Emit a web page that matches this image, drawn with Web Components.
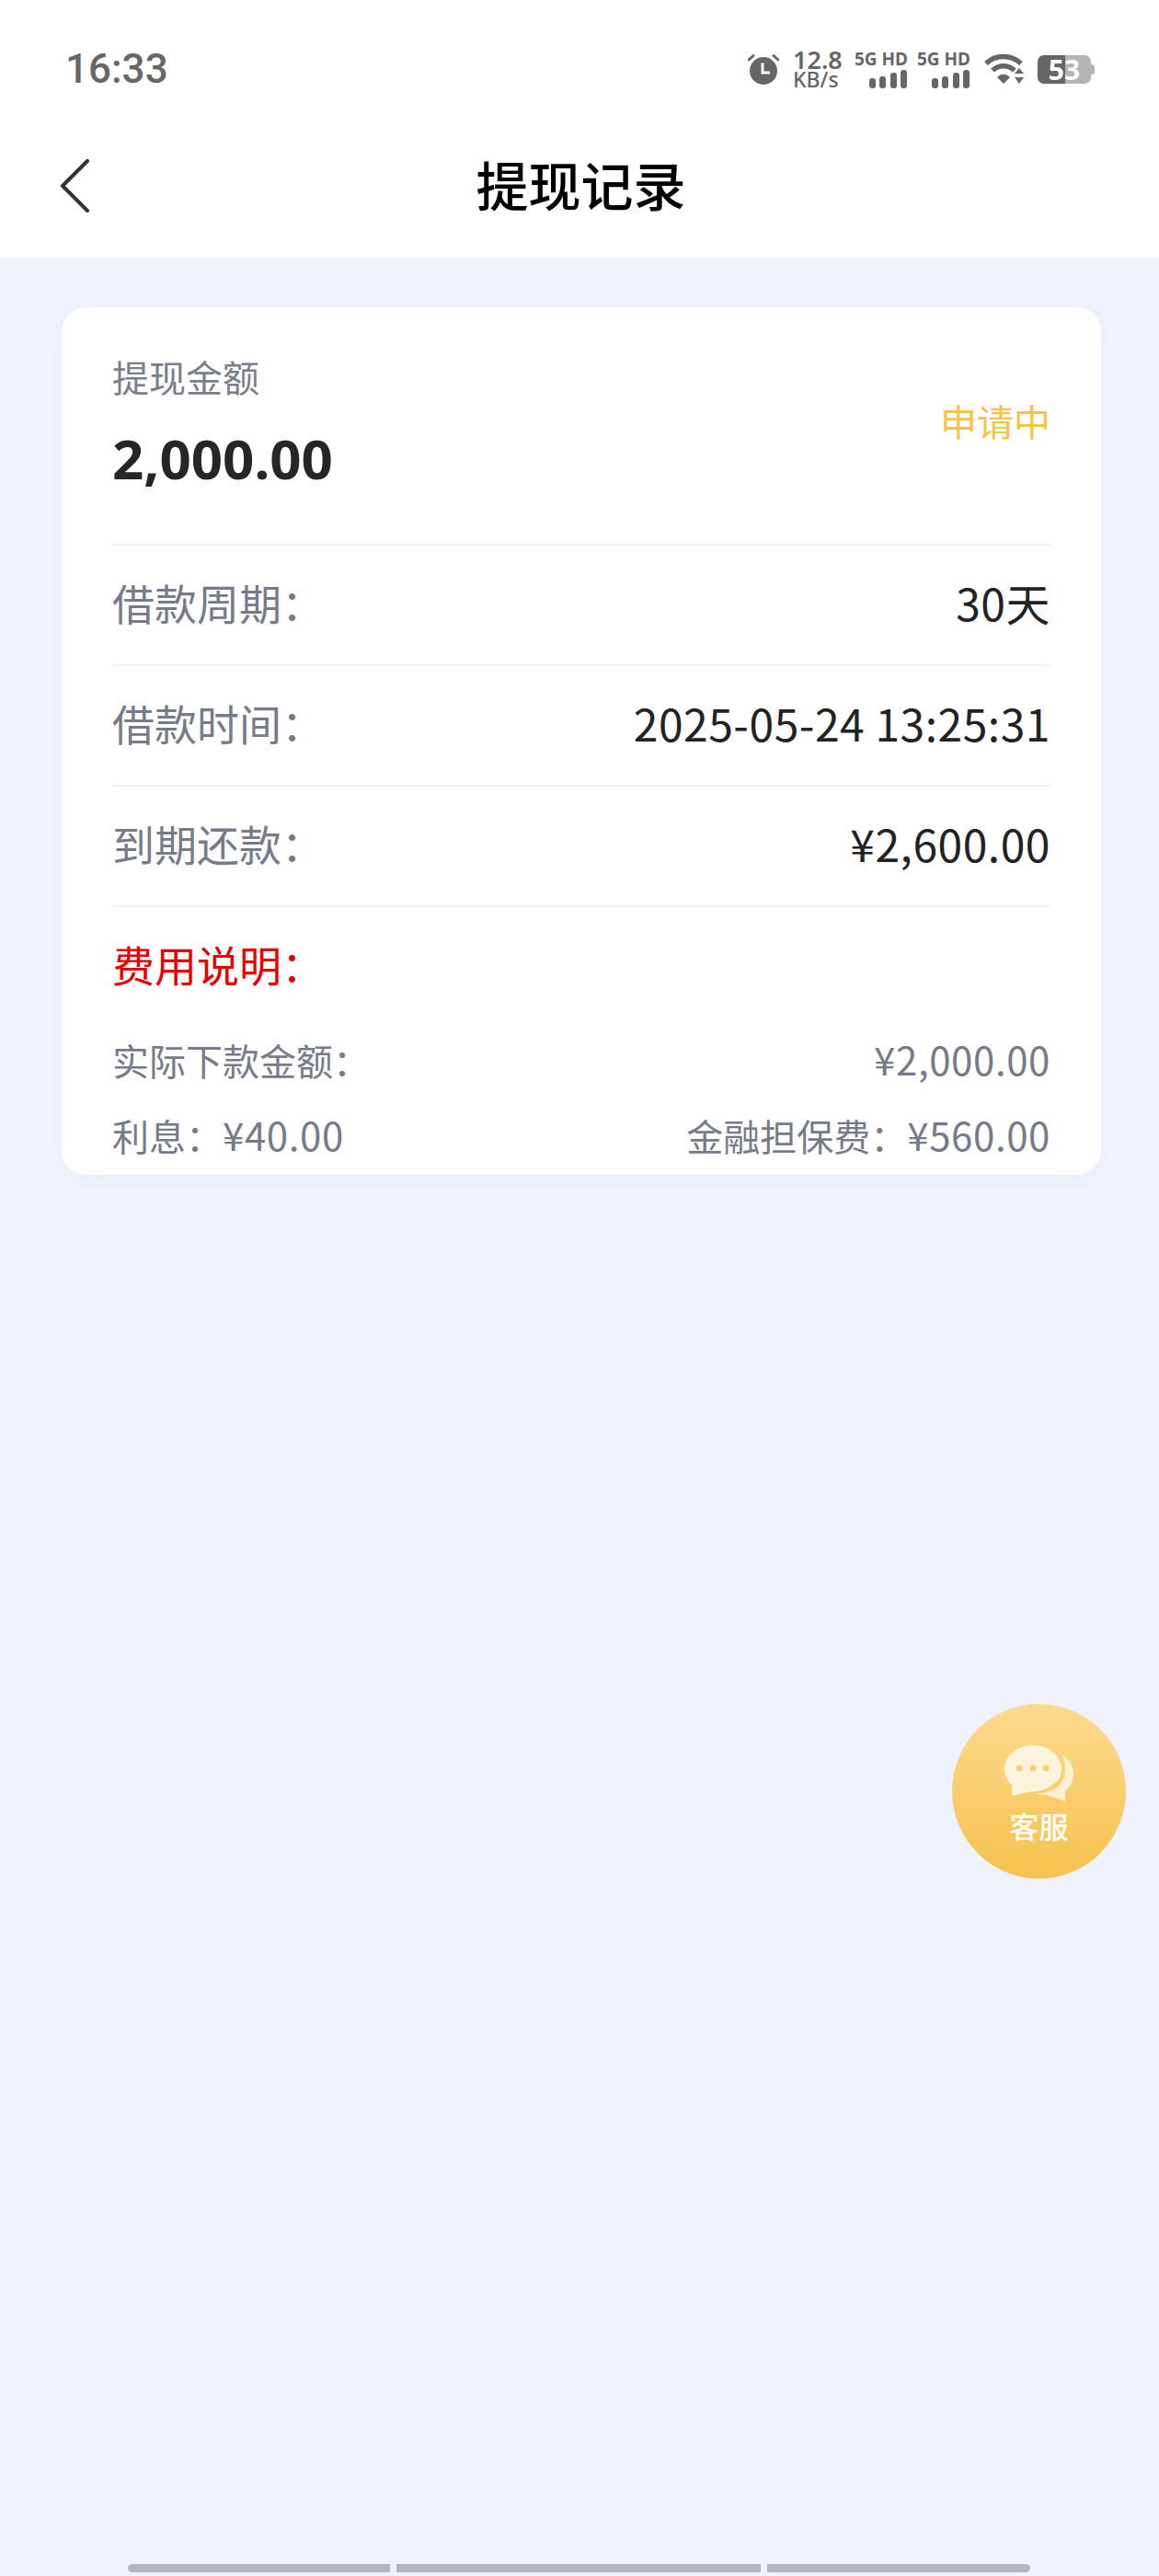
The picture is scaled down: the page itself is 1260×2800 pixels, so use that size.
<!DOCTYPE html>
<html lang="zh-CN">
<head>
<meta charset="utf-8">
<title>提现记录</title>
<style>
html, body {
    margin: 0;
    background: #f0f3fe;
    font-family: "Noto Sans CJK SC", "Noto Sans", sans-serif;
}
</style>
</head>
<body>
<record-page>
    <status-bar></status-bar>
    <nav-header>提现记录</nav-header>
    <record-card>
        <record-row><span slot="label">借款周期：</span>30天</record-row>
        <record-row><span slot="label">借款时间：</span>2025-05-24 13:25:31</record-row>
        <record-row><span slot="label">到期还款：</span>¥2,600.00</record-row>
        <fee-note slot="fees"></fee-note>
    </record-card>
    <service-button></service-button>
    <gesture-bar></gesture-bar>
</record-page>
<script>
class RecordPage extends HTMLElement {
    constructor() {
        super();
        this.attachShadow({ mode: 'open' }).innerHTML = `
<style>
:host {
    display: flex;
    flex-direction: column;
    position: relative;
    height: 2800px;
    overflow: hidden;
    background: #f0f3fe;
}
</style>
<slot></slot>`;
    }
}

class StatusBar extends HTMLElement {
    constructor() {
        super();
        const signal = `
<div class="net">
    <span class="net-label">5G HD</span>
    <svg width="42" height="20" viewBox="0 0 42 20" fill="#666">
        <rect x="0" y="9" width="7" height="11" rx="3"/>
        <rect x="11" y="7" width="7" height="13" rx="3"/>
        <rect x="23" y="3" width="7" height="17" rx="3"/>
        <rect x="34" y="0" width="7" height="20" rx="3"/>
    </svg>
</div>`;
        this.attachShadow({ mode: 'open' }).innerHTML = `
<style>
:host {
    display: flex;
    align-items: center;
    justify-content: space-between;
    height: 124px;
    padding: 26px 74px 0 71px;
    box-sizing: border-box;
    background: #fff;
    color: #666;
}
.time {
    font: 500 44px/1 Roboto, sans-serif;
}
.icons {
    display: flex;
    align-items: center;
}
.speed {
    display: flex;
    flex-direction: column;
    width: 52px;
    margin: 0 17px 0 15px;
    color: #666;
}
.speed b {
    font: 600 27px/22px "Noto Sans", sans-serif;
}
.speed span {
    font: 500 23px/20px "Noto Sans", sans-serif;
}
.net {
    display: flex;
    flex-direction: column;
    align-items: flex-end;
    width: 56px;
    margin-right: 12px;
}
.net-label {
    font: 700 19px/19px "Noto Sans", sans-serif;
    white-space: nowrap;
    margin-bottom: 2px;
}
.wifi {
    margin: 0 15px 0 3px;
}
.battery {
    position: relative;
    display: flex;
    align-items: center;
    justify-content: center;
    width: 58px;
    height: 31px;
    border-radius: 7px;
    background: linear-gradient(90deg, #666 0 30px, #b4b4b4 30px);
    color: #fff;
    font: 700 30px/31px "Noto Sans", sans-serif;
}
.battery::after {
    content: "";
    position: absolute;
    right: -4px;
    top: 10px;
    width: 4px;
    height: 11px;
    border-radius: 0 3px 3px 0;
    background: #b4b4b4;
}
</style>
<span class="time">16:33</span>
<div class="icons">
    <svg width="34" height="34" viewBox="0 0 34 34">
        <circle cx="17" cy="19" r="15" fill="#666"/>
        <path d="M1 7 6 2.5M33 7 28 2.5" stroke="#666" stroke-width="3" stroke-linecap="round"/>
        <path d="M16 10.5V21H24" fill="none" stroke="#fff" stroke-width="3"/>
    </svg>
    <div class="speed"><b>12.8</b><span>KB/s</span></div>
    ${signal}
    ${signal}
    <svg class="wifi" width="43" height="35" viewBox="0 0 43 35" fill="none">
        <path d="M2 11C12 1 29 1 40 11" stroke="#666" stroke-width="5.5"/>
        <path d="M9 18.5C16 12 26 12 33 18.5" stroke="#666" stroke-width="5.5"/>
        <path d="M14 26 21 33 28 26C24 21.500 18 21.500 14 26Z" fill="#666"/>
        <path d="M33 22H43L38 16ZM33 26H43L38 33Z" fill="#666"/>
    </svg>
    <div class="battery">53</div>
</div>`;
    }
}

class NavHeader extends HTMLElement {
    constructor() {
        super();
        this.attachShadow({ mode: 'open' }).innerHTML = `
<style>
:host {
    display: grid;
    grid-template-columns: 1fr auto 1fr;
    align-items: center;
    height: 156px;
    padding: 0 64px;
    background: #fff;
    color: #000;
}
svg {
    display: block;
}
.title {
    font-size: 57px;
    line-height: 1;
    font-weight: 500;
    padding: 0 0 6px 3px;
}
</style>
<svg width="34" height="58" viewBox="0 0 34 58" fill="none">
    <path d="M31 2 4 29 31 56" stroke="#333" stroke-width="4" stroke-linecap="round" stroke-linejoin="round"/>
</svg>
<span class="title"><slot></slot></span>`;
    }
}

class RecordCard extends HTMLElement {
    constructor() {
        super();
        this.attachShadow({ mode: 'open' }).innerHTML = `
<style>
:host {
    display: block;
    margin: 54px 63px 0 67px;
    height: 943px;
    padding: 0 55px;
    box-sizing: border-box;
    background: #fff;
    border-radius: 26px;
    box-shadow: 0 4px 16px rgba(120, 130, 200, 0.06);
}
.top {
    display: flex;
    align-items: center;
    justify-content: space-between;
    height: 259px;
    box-sizing: border-box;
    border-bottom: 2px solid #f1f2f6;
}
.caption {
    font-size: 40px;
    line-height: 56px;
    color: #7a7e8b;
    margin-bottom: 27px;
}
.amount {
    font: 700 60px/68px "Noto Sans", sans-serif;
    color: #262626;
    margin-bottom: 13px;
}
.state {
    font-size: 40px;
    line-height: 1;
    color: #f5c445;
    margin-bottom: 12px;
}
</style>
<div class="top">
    <div>
        <div class="caption">提现金额</div>
        <div class="amount">2,000.00</div>
    </div>
    <span class="state">申请中</span>
</div>
<slot></slot>
<slot name="fees"></slot>`;
    }
}

class RecordRow extends HTMLElement {
    constructor() {
        super();
        this.attachShadow({ mode: 'open' }).innerHTML = `
<style>
:host {
    display: flex;
    align-items: center;
    justify-content: space-between;
    height: 131px;
    padding-bottom: 7px;
    box-sizing: border-box;
    border-bottom: 2px solid #f1f2f6;
    font-size: 46px;
    color: #222;
}
.label {
    color: #777b89;
}
.value {
    font-size: 48px;
    letter-spacing: 0.5px;
}
</style>
<span class="label"><slot name="label"></slot></span>
<span class="value"><slot></slot></span>`;
    }
}

class FeeNote extends HTMLElement {
    constructor() {
        super();
        this.attachShadow({ mode: 'open' }).innerHTML = `
<style>
:host {
    display: block;
    color: #777b89;
    font-size: 40px;
    line-height: 56px;
}
.heading {
    margin: 33px 0 0;
    font-size: 46px;
    line-height: 56px;
    color: #e60000;
}
.line {
    display: flex;
    align-items: baseline;
    justify-content: space-between;
}
.first {
    margin-top: 48px;
}
.second {
    margin-top: 25px;
}
.num {
    font-size: 42px;
    letter-spacing: 0.6px;
}
</style>
<div class="heading">费用说明：</div>
<div class="line first"><span>实际下款金额：</span><span class="num">¥2,000.00</span></div>
<div class="line second"><span>利息：<span class="num">¥40.00</span></span><span>金融担保费：<span class="num">¥560.00</span></span></div>`;
    }
}

class ServiceButton extends HTMLElement {
    constructor() {
        super();
        this.attachShadow({ mode: 'open' }).innerHTML = `
<style>
:host {
    position: absolute;
    left: 1035px;
    top: 1852px;
    width: 189px;
    height: 190px;
    box-sizing: border-box;
    padding-top: 43px;
    display: flex;
    flex-direction: column;
    align-items: center;
    border-radius: 50%;
    background: linear-gradient(180deg, #fdda8e, #f6c24e);
    color: #fff;
}
svg {
    display: block;
}
span {
    font-size: 32px;
    line-height: 36px;
    font-weight: 500;
    margin-top: 6px;
}
</style>
<svg width="80" height="65" viewBox="0 0 80 65">
    <path d="M33 2C16 2 2 13 2 28C2 35 5 41 10 45L10 57L30 52.500C47 53 64 43 64 28C64 13 50 2 33 2Z" fill="#fdf4de"/>
    <path d="M64 12C73 17 78 26 77 36C76 44 72 49 68 52L68 63L48 56C42 56 38 55 37 54.500C52 54 64 48 67 36C69 27 68 18 64 12Z" fill="#fdf1d2"/>
    <circle cx="18" cy="27" r="3.500" fill="#f8cf74"/>
    <circle cx="33" cy="27" r="3.500" fill="#f8cf74"/>
    <circle cx="47" cy="27" r="3.500" fill="#f8cf74"/>
</svg>
<span>客服</span>`;
    }
}

class GestureBar extends HTMLElement {
    constructor() {
        super();
        this.attachShadow({ mode: 'open' }).innerHTML = `
<style>
:host {
    display: flex;
    gap: 7px;
    margin: auto 140px 4px 139px;
    height: 9px;
}
i {
    background: #b4b7c2;
}
i:nth-of-type(1) {
    width: 285px;
    border-radius: 5px 0 0 5px;
}
i:nth-of-type(2) {
    width: 396px;
}
i:nth-of-type(3) {
    width: 286px;
    border-radius: 0 5px 5px 0;
}
</style>
<i></i><i></i><i></i>`;
    }
}

customElements.define('record-page', RecordPage);
customElements.define('status-bar', StatusBar);
customElements.define('nav-header', NavHeader);
customElements.define('record-card', RecordCard);
customElements.define('record-row', RecordRow);
customElements.define('fee-note', FeeNote);
customElements.define('service-button', ServiceButton);
customElements.define('gesture-bar', GestureBar);
</script>
</body>
</html>
